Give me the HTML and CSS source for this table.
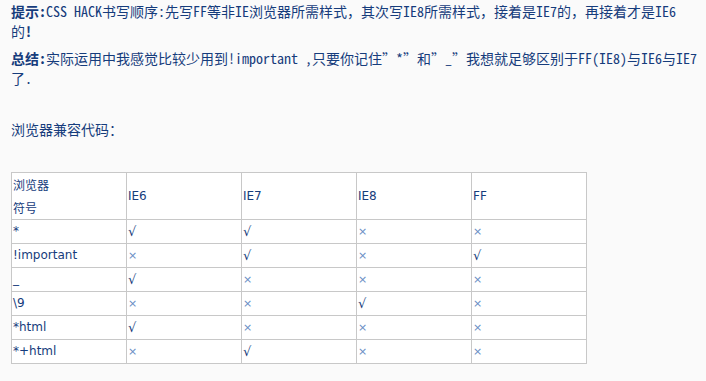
FILE: index.html
```html
<!DOCTYPE html>
<html lang="zh-CN">
<head>
<meta charset="utf-8">
<title>CSS HACK</title>
<link rel="stylesheet" href="styles.css">
</head>
<body>
<div class="article">
  <p class="note"><strong>提示:</strong>CSS HACK书写顺序:先写FF等非IE浏览器所需样式，其次写IE8所需样式，接着是IE7的，再接着才是IE6<br>的<strong>!</strong></p>
  <p class="note"><strong>总结:</strong>实际运用中我感觉比较少用到!important ,只要你记住”*”和”_”我想就足够区别于FF(IE8)与IE6与IE7了.</p>
  <p class="caption">浏览器兼容代码：</p>
  <table class="compat">
    <tr class="head"><td>浏览器<br>符号</td><td>IE6</td><td>IE7</td><td>IE8</td><td>FF</td></tr>
    <tr><td>*</td><td class="y">√</td><td class="y">√</td><td class="n">×</td><td class="n">×</td></tr>
    <tr><td>!important</td><td class="n">×</td><td class="y">√</td><td class="n">×</td><td class="y">√</td></tr>
    <tr><td>_</td><td class="y">√</td><td class="n">×</td><td class="n">×</td><td class="n">×</td></tr>
    <tr><td>\9</td><td class="n">×</td><td class="n">×</td><td class="y">√</td><td class="n">×</td></tr>
    <tr><td>*html</td><td class="y">√</td><td class="n">×</td><td class="n">×</td><td class="n">×</td></tr>
    <tr><td>*+html</td><td class="n">×</td><td class="y">√</td><td class="n">×</td><td class="n">×</td></tr>
  </table>
</div>
</body>
</html>
```
FILE: styles.css
```css
html, body {
  margin: 0;
  padding: 0;
  background: #fafafa;
}
body {
  color: #163c7c;
  font-family: "Noto Sans Mono CJK SC", "Noto Sans CJK SC", sans-serif;
  font-size: 14px;
}
.article {
  width: 692px;
  padding: 1px 0 0 11px;
}
.note {
  margin: 0 0 7px;
  line-height: 20px;
}
.note strong {
  font-weight: bold;
}
.caption {
  margin: 31px 0 0;
  line-height: 20px;
}
.compat {
  margin-top: 33px;
  border-collapse: collapse;
  background: #fff;
  font-family: "DejaVu Sans", "Noto Sans CJK SC", sans-serif;
  font-size: 12px;
  line-height: 23px;
}
.compat td {
  width: 112px;
  padding: 0 1px;
  border: 1px solid #c8c8c8;
  vertical-align: middle;
}
.compat .head td:first-child {
  font-family: "Noto Sans CJK SC", sans-serif;
}
.compat .y {
  color: #163c7c;
  font-size: 13px;
}
.compat .n {
  color: #6a8cc4;
  font-size: 11px;
}
```
